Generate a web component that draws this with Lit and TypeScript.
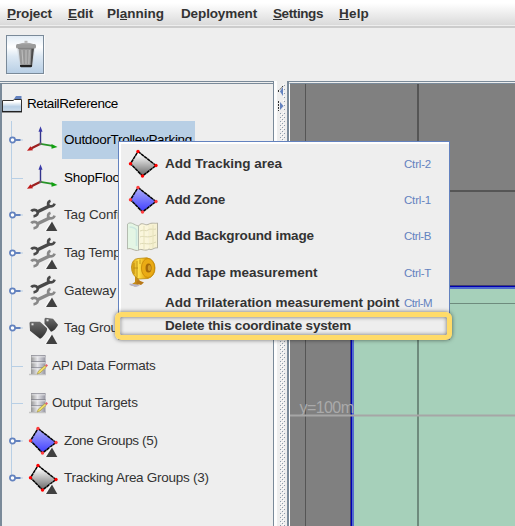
import { LitElement, html, svg, css } from "lit";
import { customElement } from "lit/decorators.js";
import { styleMap } from "lit/directives/style-map.js";

const ctx = document.createElement("canvas").getContext("2d")!;

/** Letter spacing that makes a label occupy the given width. */
function tracking(text: string, font: string, width: number) {
  ctx.font = font;
  return { letterSpacing: `${((width - ctx.measureText(text).width) / text.length).toFixed(3)}px` };
}
const REG = '13.5px "Liberation Sans"';
const BOLD = 'bold 13.5px "Liberation Sans"';
const SMALL = '11.5px "Liberation Sans"';

const triangle = svg`<path d="M25 21.500 L31 32 H18.500z" fill="#fafafa"/><path d="M26 22.500 L31.300 32 H20z" fill="#404040"/>`;

const axes = svg`<g transform="translate(-.5 1.800)">
  <path d="M15 18V4" stroke="#34348c" stroke-width="1.400"/>
  <path d="M15 .5 17 6h-4z" fill="#3a3aa8"/>
  <path d="M15 18 6 22.500" stroke="#9c2020" stroke-width="2.200"/>
  <path d="M1.500 25 5 20.500 7.500 24.500z" fill="#c01818"/>
  <path d="M15 18 27 20" stroke="#279427" stroke-width="1.800"/>
  <path d="M32 21.300 26 18.300V23z" fill="#10a010"/>
  <circle cx="15" cy="18" r="1.400" fill="#666"/></g>`;

const wrench = (color: string) => svg`
  <g fill="none" stroke=${color}>
    <path d="M11 13 23.500 7" stroke-width="3.600"/>
    <path d="M24.500 1.800C21.500 2.800 21.300 6.500 24 7.300 26 7.800 28 6.500 28.600 4.600" stroke-width="2.700"/>
    <path d="M5.200 12.200C6.500 10.600 9.800 10.300 11.300 12.300 12.600 14.500 11 17 7.500 17.300" stroke-width="2.700"/>
  </g>`;
const wrenches = svg`${wrench("#484848")}<g transform="translate(0 12)">${wrench("#888")}</g>${triangle}`;

const tags = svg`
  <defs><linearGradient id="tg" x2="0" y2="1"><stop stop-color="#6c6c6c"/><stop offset="1" stop-color="#303030"/></linearGradient></defs>
  <g transform="translate(0 1.800)">
  <path d="M3.500 9 4.500 8H14L21 14.500C22 17 16.500 24.500 14 25L4 17z" fill="url(#tg)"/>
  <path d="M18.500 5 19.500 4 27 5 32 11C31 14 27 18 25 18L22 14 18.500 10z" fill="url(#tg)"/>
  <rect x="5.500" y="9.500" width="2" height="2" fill="#ddd"/><rect x="20.500" y="5.500" width="2" height="2" fill="#ddd"/></g>${triangle}`;

const shape = (blue: boolean) => svg`
  <defs><linearGradient id=${blue ? "zb" : "zg"} x2="0" y2="1">
    <stop offset=".1" stop-color=${blue ? "#a4a4fa" : "#ffffff"}/><stop offset=".9" stop-color=${blue ? "#4848ff" : "#777777"}/></linearGradient></defs>
  <path d="M12 3.500 30 17.500 16.500 28 4.500 15.700z" fill=${blue ? "url(#zb)" : "url(#zg)"} stroke="#000" stroke-width="1.500" stroke-dasharray="3.500 .4"/>
  <g fill=${blue ? "#ff3c3c" : "#ff0000"}><circle cx="12" cy="3.500" r="1.700"/><circle cx="30" cy="17.500" r="1.700"/><circle cx="16.500" cy="28" r="1.700"/><circle cx="4.500" cy="15.700" r="1.700"/></g>`;

const database = svg`
  <defs><linearGradient id="db"><stop stop-color="#969696"/><stop offset=".45" stop-color="#e6e6ea"/><stop offset="1" stop-color="#9494a0"/></linearGradient></defs>
  <path d="M0 19.500H17" stroke="#c4c4c4" stroke-width="1.500"/>
  <rect x="2" y=".5" width="14.500" height="18.500" fill="url(#db)"/>
  <path d="M2 .8H16.500M2 6.700H16.500M2 12.800H16.500" stroke="#80808a" stroke-width=".9"/>
  <path d="M2.500 1.800H16M2.500 7.800H16M2.500 13.800H16" stroke="#f4f4f6" stroke-width=".8"/>
  <path d="M8 19 9.500 16 16 10.500 17.500 12 11 18z" fill="#efdf67" stroke="#a09040" stroke-width=".6"/>
  <path d="M16 10.500 17.500 9 19 10.500 17.500 12z" fill="#e2606c"/>`;

const mapIcon = svg`
  <path d="M1.500 3C5 0 8 4 12.500 5L13 29C9 30 5 26 1.500 28z" fill="#e4f6e4"/>
  <path d="M12.500 5C16 0 19 5 22 3.500L23 28C19 31 15 27 13 29z" fill="#faf6dc"/>
  <path d="M22 3.500C26 1 29 3 31.500 2V27C28 26 25 30 23 28z" fill="#f6f1d2"/>
  <path d="M14 10C18 8 20 11 22 9S28 9 30 8M14 16C18 14 20 18 30 14M14 23C18 21 22 25 30 21" fill="none" stroke="#ddd9b4" stroke-width="1"/>
  <path d="M18 5V28M27 4V27" fill="none" stroke="#e6e2bc"/>
  <path d="M3.500 6C6 6 9 7 10.500 9V25" fill="none" stroke="#cde8e0" stroke-width="1.600"/>
  <path d="M1.500 28V3C5 0 8 4 12.500 5V29" fill="none" stroke="#b4bcb0"/>
  <path d="M12.500 5C16 0 19 5 22 3.500 26 1 29 3 31.500 2V27C28 26 26 30 23 28 19 31 15 27 13 29 9 31 5 26 1.500 28" fill="none" stroke="#b4b2a2"/>`;

const tape = svg`
  <defs><linearGradient id="tp"><stop stop-color="#d89c0c"/><stop offset=".3" stop-color="#ffe04c"/><stop offset=".6" stop-color="#e8a810"/></linearGradient></defs>
  <path d="M9 18 12 21 15 26 9 29.500 4.500 28 9 25z" fill="#c48a18"/>
  <path d="M5.500 10Q6 2 12 1.500L21 .8Q29 3 29 11T22 21.500L13 22Q5.500 19 5.500 10z" fill="url(#tp)" stroke="#b98a12" stroke-width=".8"/>
  <ellipse cx="22" cy="11" rx="6.600" ry="9.500" fill="#eaab14" stroke="#c48708" stroke-width=".8"/>
  <ellipse cx="22.500" cy="11" rx="3" ry="4.600" fill="#a66a08"/><ellipse cx="23.400" cy="11" rx="1.600" ry="3" fill="#d09a26"/>
  <path d="M8 6V17M11 4V20M14 2.500V7M7.500 11H12" stroke="#b88910" stroke-width=".8" fill="none"/>
  <path d="M3.500 26.500 11 27.500 14 28.500 10 30 3.500 28z" fill="#b9b5c8"/><path d="M12 23 18 25.500 15 28 10 26.500z" fill="#b87818"/>`;

const folder = svg`
  <defs><linearGradient id="fl" x2="0" y2="1"><stop offset=".2" stop-color="#fff"/><stop offset=".6" stop-color="#b8cfe5"/><stop offset="1" stop-color="#cfdfee"/></linearGradient></defs>
  <path d="M.500 4.500H10.500L12.500 3.500H19V15.500H.5z" fill="url(#fl)"/>
  <path d="M12 3 14 0H19.500V3z" fill="#6382bf"/>
  <path d="M.500 16V4.500H11L12.500 3.500H19.500V16" fill="none" stroke="#333"/><path d="M0 15.700H20" stroke="#222" stroke-width="1.500"/>`;

const trash = svg`
  <path d="M3 9 21 8 19 26 6 26z" fill="#ccd2d8" opacity=".6"/>
  <path d="M4.500 8H19.500L17.500 26.500H6.500z" fill="#989898"/>
  <path d="M17.500 8H20L18 26.500H16.500z" fill="#4c4c4c"/>
  <path d="M8 10 9 24M12 10V24M15.300 10 14.800 24" stroke="#bdbdbd" stroke-width="1.100"/>
  <path d="M6 25H18V26.500L17 27.300H7L6 26.500z" fill="#222"/>
  <rect x="2" y="4" width="20" height="4.500" rx="1.500" fill="#9b9b9b"/><path d="M4 4.200Q12 1.500 20 4.200z" fill="#aaa"/><rect x="10.500" y="0.800" width="3" height="2" fill="#b4b4b4"/>
  <path d="M4 8.400H20" stroke="#7c7c7c" stroke-width=".8"/>`;

const menus = [
  ["", "P", "roject", 45, 61], ["", "E", "dit", 25, 39], ["Pl", "a", "nning", 57, 74],
  ["Deployment", "", "", 76, 92], ["", "S", "ettings", 50, 66], ["", "H", "elp", 30, 40],
] as const;

const nodes: [string, number, unknown, boolean, string][] = [
  ["OutdoorTrolleyParking", 128, axes, true, "root sel"],
  ["ShopFloor", 60, axes, false, "root"],
  ["Tag Configurations", 110, wrenches, true, ""],
  ["Tag Templates", 84, wrenches, true, ""],
  ["Gateway Configurations", 140, wrenches, true, ""],
  ["Tag Groups (4)", 87, tags, true, ""],
  ["API Data Formats", 103.5, database, false, "narrow"],
  ["Output Targets", 86, database, false, "narrow"],
  ["Zone Groups (5)", 93.5, svg`${shape(true)}${triangle}`, true, ""],
  ["Tracking Area Groups (3)", 145.5, svg`${shape(false)}${triangle}`, true, ""],
];

const actions: [string, number, string, unknown, string][] = [
  ["Add Tracking area", 117, "Ctrl-2", svg`<g transform="translate(0 -1)">${shape(false)}</g>`, "tall"],
  ["Add Zone", 60, "Ctrl-1", svg`<g transform="translate(0 -1)">${shape(true)}</g>`, "tall"],
  ["Add Background image", 149, "Ctrl-B", mapIcon, "tall"],
  ["Add Tape measurement", 152.5, "Ctrl-T", tape, "tall tape"],
  ["Add Trilateration measurement point", 234.5, "Ctrl-M", null, "short"],
  ["Delete this coordinate system", 186, "", null, "short"],
];

@customElement("app-root")
export class AppRoot extends LitElement {
  static styles = css`
    :host { display: flex; flex-direction: column; position: relative; width: 515px; height: 526px; overflow: hidden;
      background: #eee; color: #333; font: 13.5px/16px "Liberation Sans", Arial, sans-serif; white-space: nowrap; }
    * { box-sizing: border-box; }
    svg { display: block; flex: none; overflow: visible; }
    .menubar { display: flex; height: 28px; flex: none; padding: 6px 0 0 7px; font-weight: bold;
      background: linear-gradient(#fff 0, #fff 3px, #dadada 25px, #eee 25px, #eee 26px, #ccc 26px); }
    .menubar span { flex: none; }
    .menubar u { text-decoration: none; display: inline-block; height: 14px; border-bottom: 1px solid #333; line-height: 16px; vertical-align: top; }
    .toolbar { height: 53px; flex: none; padding: 7px 6px; }
    .tool { width: 38px; height: 39px; padding: 4px 7px; border: 1px solid #7a8a99; background: linear-gradient(#e3edf6, #fff 30%, #dce8f3 55%, #b8cfe5); box-shadow: 1px 1px #fafafa; }
    .body { display: flex; flex: 1; min-height: 0; }
    .tree { width: 274px; flex: none; border-top: 1px solid #7a8a99; border-right: 1px solid #7a8a99; padding-top: 1px; }
    .treein { height: 100%; border-left: 2px solid #7a8a99; border-top: 1px solid #7a8a99; padding-top: 7px; }
    .rootrow { display: flex; gap: 5px; height: 26px; align-items: center; color: #000; }
    .nodes { position: relative; padding-top: 4.600px; }
    .nodes::before { content: ""; position: absolute; left: 9px; top: 4px; height: 357px; width: 1px; background: #b8cfe5; }
    .node { display: flex; align-items: center; height: 37.550px; padding-left: 6px; position: relative; }
    .handle { margin-right: 2px; }
    .label { margin-left: 2px; height: 38px; line-height: 38px; padding: 0 2px; }
    .narrow .label { margin-left: 1px; }
    .root .label { color: #000; }
    .sel .label { background: #b8cfe5; width: 133px; }
    .divider { width: 13px; flex: none; background: #eee; border-left: 3px solid #fdfdfd; padding: 3px 0 0 2px; }
    .canvas { flex: 1; display: flex; border-top: 1px solid #7a8a99; border-left: 2px solid #7a8a99; padding-top: 1px; }
    .canvas svg { border-left: 1px solid #fff; border-top: 1px solid #7a8a99; }
    .axis { font: 16px "Liberation Sans", Arial, sans-serif; fill: #aaa; }
    .popup { position: absolute; left: 118px; top: 141px; width: 332px; height: 199px; border: 1px solid #6382bf; background: #eee;
      box-shadow: inset 2px 2px #fff; padding-top: 4px; }
    .action { display: flex; align-items: center; font-weight: bold; padding-left: 7px; }
    .tall { height: 36px; } .tape { height: 37px; } .short { height: 23px; }
    .pic { width: 33px; flex: none; margin-right: 6px; }
    .name { width: 239px; flex: none; }
    .key { font-weight: normal; font-size: 11.5px; color: #6382bf; }
    .ring { position: absolute; left: 115px; top: 312px; width: 337px; height: 28px; border: 5px solid #ffdb69; border-radius: 6px;
      box-shadow: 0 0 4px rgba(0,0,0,.55), inset 0 0 4px rgba(0,0,0,.55); }
  `;

  render() {
    return html`
      <div class="menubar">${menus.map(([a, u, b, w, adv]) => html`<span style=${styleMap({ width: `${adv}px`, ...tracking(a + u + b, BOLD, w) })}>${a}${u ? html`<u>${u}</u>` : ""}${b}</span>`)}</div>
      <div class="toolbar"><div class="tool"><svg width="24" height="28">${trash}</svg></div></div>
      <div class="body">
        <div class="tree"><div class="treein">
          <div class="rootrow"><svg width="20" height="17">${folder}</svg><span style=${styleMap(tracking("RetailReference", REG, 91))}>RetailReference</span></div>
          <div class="nodes">${nodes.map(([t, w, icon, open, cls]) => html`
            <div class="node ${cls}">
              <svg class="handle" width="16" height="10">${open
                ? svg`<path d="M12 5H15" stroke="#b8cfe5"/><path d="M7 5H12.500" stroke="#6382bf" stroke-width="2"/><circle cx="4.500" cy="5" r="2.600" fill="#fff" stroke="#6382bf" stroke-width="1.700"/>`
                : svg`<path d="M4 5.500H15" stroke="#b8cfe5"/>`}</svg>
              ${cls === "narrow" ? html`<svg width="23" height="21"><g transform="translate(3 0)">${icon}</g></svg>` : html`<svg width="34" height="32">${icon}</svg>`}
              <span class="label" style=${styleMap(tracking(t, REG, w))}>${t}</span>
            </div>`)}</div>
        </div></div>
        <div class="divider"><svg width="8" height="445">
          <defs><pattern id="dots" width="4" height="4" patternUnits="userSpaceOnUse"><path d="M1 1h1v1H1zM3 3h1v1H3z" fill="#8d9cab"/><path d="M0 0h1v1H0zM2 2h1v1H2z" fill="#fff"/></pattern></defs>
          <rect x="1" y="0" width="5" height="445" fill="url(#dots)"/>
          <path d="M-1 0H4V28H-1z" fill="#eee"/><path d="M4 3V12L1 7.500z" fill="#6382bf"/><path d="M1 18V26L4.500 22z" fill="#6382bf"/>
          <path d="M4 2 1 5.500M-.5 6V9M-.5 17V27" stroke="#333" stroke-dasharray="2 1"/></svg></div>
        <div class="canvas"><svg width="226" height="443" viewBox="290 84 225 442" preserveAspectRatio="none">
          <path d="M290 84H515V526H290z" fill="#808080"/>
          <path d="M305 84h1V526h-1zM417 84h2V526h-2zM290 190H515v2H290z" fill="#555"/>
          <path d="M350 285H515V526H350z" fill="#404070"/><path d="M351 286H515V526H351z" fill="#0000b4"/><path d="M352 287H515V526H352z" fill="#526ccc"/>
          <path d="M354 289H515V526H354z" fill="#a6d0ba"/>
          <path d="M417 289h2V526h-2zM354 303H515v1H354z" fill="#6e8b7d"/>
          <text class="axis" x="299.500" y="413" textLength="54.500">y=100m</text>
          <path d="M290 414.500H515v2H290z" fill="#a6a6a6"/></svg></div>
      </div>
      <div class="popup">${actions.map(([t, w, key, icon, cls]) => html`
        <div class="action ${cls}">
          <div class="pic">${icon ? html`<svg width="33" height="31">${icon}</svg>` : ""}</div>
          <span class="name" style=${styleMap(tracking(t, BOLD, w))}>${t}</span>
          <span class="key" style=${styleMap(tracking(key || " ", SMALL, key === "Ctrl-M" ? 28 : 27))}>${key}</span>
        </div>`)}</div>
      <div class="ring"></div>`;
  }
}
